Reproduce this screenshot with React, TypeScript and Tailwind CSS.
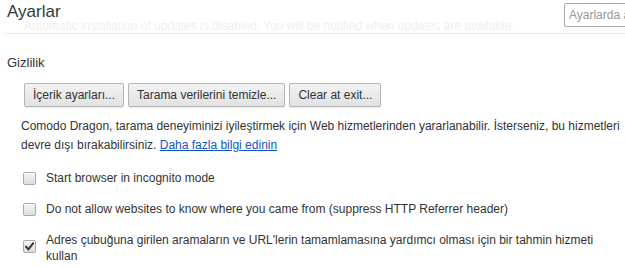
import React from "react";

function Btn({ children }: { children: React.ReactNode }) {
  return (
    <button className="h-[24px] px-[8px] rounded-[2px] border border-[#b4b4b4] bg-gradient-to-b from-[#f3f3f3] to-[#e2e2e2] text-[12px] leading-[14px] text-[#333] shadow-[0_1px_0_rgba(0,0,0,0.08)]">
      {children}
    </button>
  );
}

function Check({ checked }: { checked?: boolean }) {
  return (
    <span className="relative shrink-0 w-[13px] h-[13px] rounded-[2px] border border-[#a9a9a9] bg-gradient-to-b from-[#f4f4f4] to-[#dedede] shadow-[inset_0_1px_0_#fff]">
      {checked && (
        <svg viewBox="0 0 13 13" className="absolute left-[-1px] top-[-1px] w-[13px] h-[13px]">
          <path d="M3 6.6 L5.4 9.4 L10.2 3.2" fill="none" stroke="#333" strokeWidth="2" strokeLinecap="round" strokeLinejoin="round" />
        </svg>
      )}
    </span>
  );
}

export default function App() {
  return (
    <div
      className="relative w-[625px] h-[267px] overflow-hidden bg-white text-[#333]"
      style={{ fontFamily: '"Liberation Sans", Arial, sans-serif' }}
    >
      <div className="relative ml-[6px] h-[34px] border-b border-[#ececec] flex">
        <div className="flex-1 pl-[1px] pt-[2px] text-[17px] leading-[20px] text-[#303942]">Ayarlar</div>
        <div className="w-[61px] shrink-0 pt-[3px]">
          <div className="w-[140px] h-[24px] rounded-[2px] border border-[#aaa] bg-white px-[4px] text-[12px] leading-[22px] text-[#999]">
            Ayarlarda ara
          </div>
        </div>
        <div className="absolute left-[18px] top-[19px] text-[12px] leading-[14px] text-[#efefef] whitespace-nowrap">
          Automatic installation of updates is disabled. You will be notified when updates are available.
        </div>
      </div>

      <div className="pl-[7px] pt-[21px] text-[13px] leading-[16px]">Gizlilik</div>

      <div className="pl-[24px] pt-[12px] flex gap-[4px]">
        <Btn>İçerik ayarları...</Btn>
        <Btn>Tarama verilerini temizle...</Btn>
        <Btn>Clear at exit...</Btn>
      </div>

      <p className="pl-[21px] pt-[10px] text-[12px] leading-[19px]">
        Comodo Dragon, tarama deneyiminizi iyileştirmek için Web hizmetlerinden yararlanabilir. İsterseniz, bu hizmetleri devre dışı bırakabilirsiniz.{" "}
        <a className="text-[#1155cc] underline">Daha fazla bilgi edinin</a>
      </p>

      <div className="pl-[23px] pt-[15px] flex flex-col gap-[15px] text-[12px] leading-[16px]">
        <label className="flex items-start gap-[10px]">
          <span className="mt-[2px] flex"><Check /></span>
          <span>Start browser in incognito mode</span>
        </label>
        <label className="flex items-start gap-[10px]">
          <span className="mt-[2px] flex"><Check /></span>
          <span>Do not allow websites to know where you came from (suppress HTTP Referrer header)</span>
        </label>
        <label className="flex items-start gap-[10px]">
          <span className="mt-[8px] flex"><Check checked /></span>
          <span className="w-[560px]">
            Adres çubuğuna girilen aramaların ve URL'lerin tamamlamasına yardımcı olması için bir tahmin hizmeti kullan
          </span>
        </label>
      </div>
    </div>
  );
}
